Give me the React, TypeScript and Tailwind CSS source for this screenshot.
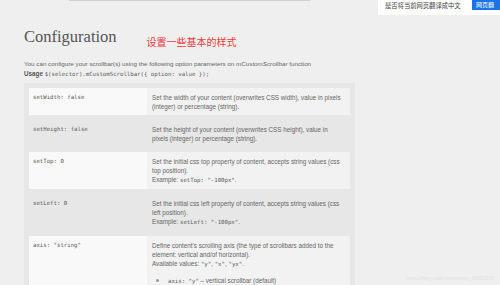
import React from "react";

const mono = "font-['DejaVu_Sans_Mono',monospace]";

function Code({ children }: { children: React.ReactNode }) {
  return <span className={`${mono} text-[5.7px] text-[#5a5a5a]`}>{children}</span>;
}

function L({ children }: { children: React.ReactNode }) {
  return <div className="whitespace-nowrap">{children}</div>;
}

type Row = { key: string; desc: React.ReactNode; striped: boolean };

const rows: Row[] = [
  {
    key: "setWidth: false",
    striped: true,
    desc: (
      <>
        <L>Set the width of your content (overwrites CSS width), value in pixels</L>
        <L>(integer) or percentage (string).</L>
      </>
    ),
  },
  {
    key: "setHeight: false",
    striped: false,
    desc: (
      <>
        <L>Set the height of your content (overwrites CSS height), value in</L>
        <L>pixels (integer) or percentage (string).</L>
      </>
    ),
  },
  {
    key: "setTop: 0",
    striped: true,
    desc: (
      <>
        <L>Set the initial css top property of content, accepts string values (css</L>
        <L>top position).</L>
        <L>
          Example: <Code>setTop: "-100px"</Code>.
        </L>
      </>
    ),
  },
  {
    key: "setLeft: 0",
    striped: false,
    desc: (
      <>
        <L>Set the initial css left property of content, accepts string values (css</L>
        <L>left position).</L>
        <L>
          Example: <Code>setLeft: "-100px"</Code>.
        </L>
      </>
    ),
  },
  {
    key: 'axis: "string"',
    striped: true,
    desc: (
      <>
        <L>Define content's scrolling axis (the type of scrollbars added to the</L>
        <L>element: vertical and/of horizontal).</L>
        <L>
          Available values: <Code>"y"</Code>, <Code>"x"</Code>, <Code>"yx"</Code>.
        </L>
        <ul className="mt-[7px] pl-[4px]">
          <li className="flex items-center gap-[9px] whitespace-nowrap">
            <span className="w-[3px] h-[3px] rounded-full bg-[#999]" />
            <span>
              <Code>axis: "y"</Code> – vertical scrollbar (default)
            </span>
          </li>
        </ul>
      </>
    ),
  },
];

export default function App() {
  return (
    <div className="w-[500px] h-[285px] bg-[#efefef] relative overflow-hidden font-['Liberation_Sans',Arial,sans-serif]">
      <div className="ml-[69px] w-[241px] h-[1px] bg-[#d2d2d2]" />

      <div className="pl-[24px] pt-[26px]">
        <div className="flex items-end">
          <h1 className="font-['Liberation_Serif',serif] text-[16.5px] leading-[20px] text-[#555]">
            Configuration
          </h1>
          <span className="ml-[30px] mb-[-2px] font-['Noto_Sans_CJK_SC',sans-serif] text-[10px] leading-[14px] text-[#ee3b3b]">
            设置一些基本的样式
          </span>
        </div>

        <p className="mt-[12px] text-[6.25px] leading-[9.5px] text-[#666] whitespace-nowrap">
          You can configure your scrollbar(s) using the following option parameters on{" "}
          <em>mCustomScrollbar</em> function
        </p>
        <p className="text-[6.3px] leading-[9.5px] text-[#555] whitespace-nowrap">
          <b>Usage</b> <Code>$(selector).mCustomScrollbar({"{"} option: value {"}"});</Code>
        </p>

        <div className="mt-[4px] w-[331px] bg-[#e7e7e7] p-[5px] flex flex-col gap-[5px]">
          {rows.map((r) => (
            <div key={r.key} className="flex">
              <div
                className={`w-[118px] shrink-0 px-[4px] py-[4.5px] ${r.striped ? "bg-[#f9f9f9]" : ""}`}
              >
                <span className={`${mono} text-[5.7px] leading-[9px] text-[#5a5a5a] block`}>{r.key}</span>
              </div>
              <div
                className={`flex-1 px-[5px] py-[4.5px] text-[6.3px] leading-[9px] text-[#666] ${r.striped ? "bg-[#f2f2f2]" : ""}`}
              >
                {r.desc}
              </div>
            </div>
          ))}
        </div>
      </div>

      <div className="absolute top-0 left-[378px] w-[122px] h-[15px] bg-white flex items-start">
        <span className="ml-[7px] mt-[1px] font-['Noto_Sans_CJK_SC',sans-serif] text-[6.3px] leading-[9px] text-[#444]">
          是否将当前网页翻译成中文
        </span>
        <span className="ml-auto w-[28px] h-[10px] bg-[#1a73e8] text-white font-['Noto_Sans_CJK_SC',sans-serif] text-[6px] leading-[9px] pl-[4px]">
          网页翻
        </span>
      </div>

      <div className="absolute left-[406px] top-[274px] text-[5.2px] leading-[8px] text-[#e2e2e2] whitespace-nowrap">
        https://blog.csdn.net/weixin_42063930
      </div>
    </div>
  );
}
